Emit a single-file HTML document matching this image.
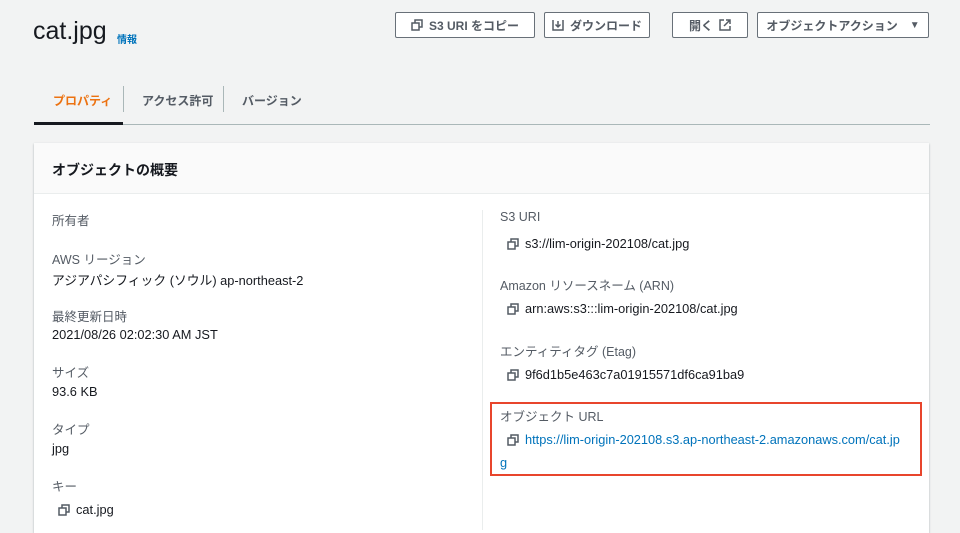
<!DOCTYPE html>
<html><head><meta charset="utf-8"><style>
*{margin:0;padding:0;box-sizing:border-box}
body{width:960px;height:525px;overflow:hidden;background:#f2f3f3;font-family:"Liberation Sans","Noto Sans CJK JP",sans-serif;color:#16191f;position:relative}
.a{position:absolute;white-space:nowrap}
.btn{position:absolute;top:12px;height:26px;border:1px solid #687078;border-radius:2px;background:#fff;font-size:12px;font-weight:bold;color:#545b64;display:flex;align-items:center;justify-content:center;gap:6px}
.lbl{font-size:12.5px;color:#545b64}
.val{font-size:12.8px;color:#16191f}
.cp{display:inline-block;vertical-align:-2px;margin-right:6px}
</style></head><body>
<div class="a" style="left:33px;top:17px;font-size:25px;">cat.jpg</div>
<div class="a" style="left:117px;top:31px;font-size:10px;font-weight:bold;color:#0073bb">情報</div>

<div class="btn" style="left:395px;width:140px"><svg width="12" height="12" viewBox="0 0 12 12" fill="none" stroke="#545b64" stroke-width="1.5"><rect x="1" y="4" width="7" height="7"/><path d="M4 4V1h7v7H8"/></svg>S3 URI をコピー</div>
<div class="btn" style="left:544px;width:106px"><svg width="12" height="12" viewBox="0 0 12 12" fill="none" stroke="#545b64" stroke-width="1.5"><path d="M1 1v10h10V1M6 2v6M3.5 5.5L6 8l2.5-2.5"/></svg>ダウンロード</div>
<div class="btn" style="left:672px;width:76px">開く <svg width="12" height="12" viewBox="0 0 12 12" fill="none" stroke="#545b64" stroke-width="1.5"><path d="M5 1H1v10h10V7M7 1h4v4M11 1L5 7"/></svg></div>
<div class="btn" style="left:757px;width:172px">オブジェクトアクション <span style="font-size:10px;margin-left:6px">▼</span></div>

<div class="a" style="left:53px;top:92px;font-size:12px;font-weight:bold;color:#ec7211">プロパティ</div>
<div class="a" style="left:123px;top:86px;width:1px;height:26px;background:#aab7b8"></div>
<div class="a" style="left:142px;top:92px;font-size:12px;font-weight:bold;color:#545b64">アクセス許可</div>
<div class="a" style="left:223px;top:86px;width:1px;height:26px;background:#aab7b8"></div>
<div class="a" style="left:242px;top:92px;font-size:12px;font-weight:bold;color:#545b64">バージョン</div>
<div class="a" style="left:34px;top:124px;width:896px;height:1px;background:#aab7b8"></div>
<div class="a" style="left:34px;top:122px;width:89px;height:3px;background:#16191f"></div>

<div class="a" style="left:34px;top:143px;width:895px;height:390px;background:#fff;box-shadow:0 1px 2px rgba(0,28,36,.3)"></div>
<div class="a" style="left:34px;top:143px;width:895px;height:51px;background:#fafafa;border-bottom:1px solid #eaeded"></div>
<div class="a" style="left:52px;top:160px;font-size:14px;font-weight:bold">オブジェクトの概要</div>
<div class="a" style="left:482px;top:210px;width:1px;height:320px;background:#eaeded"></div>

<div class="a lbl" style="left:52px;top:210px">所有者</div>
<div class="a lbl" style="left:52px;top:249px">AWS リージョン</div>
<div class="a val" style="left:52px;top:270px">アジアパシフィック (ソウル) ap-northeast-2</div>
<div class="a lbl" style="left:52px;top:306px">最終更新日時</div>
<div class="a val" style="left:52px;top:327px">2021/08/26 02:02:30 AM JST</div>
<div class="a lbl" style="left:52px;top:362px">サイズ</div>
<div class="a val" style="left:52px;top:384px">93.6 KB</div>
<div class="a lbl" style="left:52px;top:419px">タイプ</div>
<div class="a val" style="left:52px;top:441px">jpg</div>
<div class="a lbl" style="left:52px;top:476px">キー</div>
<div class="a val" style="left:58px;top:502px"><svg class="cp" width="12" height="12" viewBox="0 0 12 12" fill="none" stroke="#545b64" stroke-width="1.5"><rect x="1" y="4" width="7" height="7"/><path d="M4 4V1h7v7H8"/></svg>cat.jpg</div>

<div class="a lbl" style="left:500px;top:210px">S3 URI</div>
<div class="a val" style="left:507px;top:236px"><svg class="cp" width="12" height="12" viewBox="0 0 12 12" fill="none" stroke="#545b64" stroke-width="1.5"><rect x="1" y="4" width="7" height="7"/><path d="M4 4V1h7v7H8"/></svg>s3://lim-origin-202108/cat.jpg</div>
<div class="a lbl" style="left:500px;top:275px">Amazon リソースネーム (ARN)</div>
<div class="a val" style="left:507px;top:301px"><svg class="cp" width="12" height="12" viewBox="0 0 12 12" fill="none" stroke="#545b64" stroke-width="1.5"><rect x="1" y="4" width="7" height="7"/><path d="M4 4V1h7v7H8"/></svg>arn:aws:s3:::lim-origin-202108/cat.jpg</div>
<div class="a lbl" style="left:500px;top:341px">エンティティタグ (Etag)</div>
<div class="a val" style="left:507px;top:367px"><svg class="cp" width="12" height="12" viewBox="0 0 12 12" fill="none" stroke="#545b64" stroke-width="1.5"><rect x="1" y="4" width="7" height="7"/><path d="M4 4V1h7v7H8"/></svg>9f6d1b5e463c7a01915571df6ca91ba9</div>

<div class="a" style="left:490px;top:402px;width:432px;height:74px;border:2px solid #e8452c"></div>
<div class="a lbl" style="left:500px;top:406px">オブジェクト URL</div>
<div class="a val" style="left:507px;top:432px;color:#0073bb"><svg class="cp" width="12" height="12" viewBox="0 0 12 12" fill="none" stroke="#545b64" stroke-width="1.5"><rect x="1" y="4" width="7" height="7"/><path d="M4 4V1h7v7H8"/></svg>https://lim-origin-202108.s3.ap-northeast-2.amazonaws.com/cat.jp</div>
<div class="a val" style="left:500px;top:455px;color:#0073bb">g</div>
</body></html>
